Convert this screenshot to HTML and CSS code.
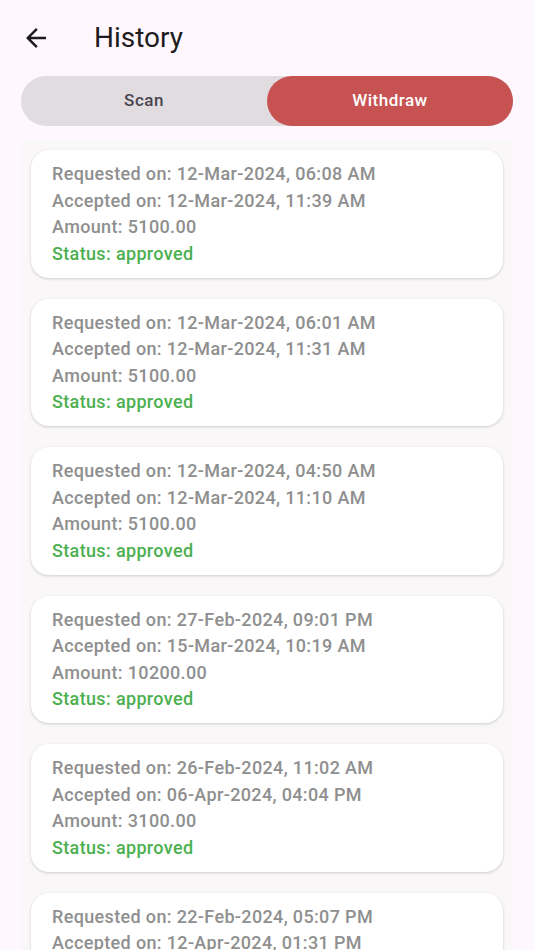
FILE: index.html
```html
<!DOCTYPE html>
<html>
<head>
<meta charset="utf-8">
<link rel="stylesheet" href="styles.css">
</head>
<body>
<div class="app">
  <header class="topbar">
    <button class="back" aria-label="Back">
      <svg width="30" height="30" viewBox="0 0 24 24"><path d="M20 11H7.83l5.59-5.59L12 4l-8 8 8 8 1.41-1.41L7.83 13H20v-2z" fill="#1d1b20"/></svg>
    </button>
    <h1 class="title">History</h1>
  </header>
  <div class="tabs">
    <div class="tab">Scan</div>
    <div class="tab active">Withdraw</div>
  </div>
  <div class="list">
    <div class="card">
      <div class="line">Requested on: 12-Mar-2024, 06:08 AM</div>
      <div class="line">Accepted on: 12-Mar-2024, 11:39 AM</div>
      <div class="line">Amount: 5100.00</div>
      <div class="line status">Status: approved</div>
    </div>
    <div class="card">
      <div class="line">Requested on: 12-Mar-2024, 06:01 AM</div>
      <div class="line">Accepted on: 12-Mar-2024, 11:31 AM</div>
      <div class="line">Amount: 5100.00</div>
      <div class="line status">Status: approved</div>
    </div>
    <div class="card">
      <div class="line">Requested on: 12-Mar-2024, 04:50 AM</div>
      <div class="line">Accepted on: 12-Mar-2024, 11:10 AM</div>
      <div class="line">Amount: 5100.00</div>
      <div class="line status">Status: approved</div>
    </div>
    <div class="card">
      <div class="line">Requested on: 27-Feb-2024, 09:01 PM</div>
      <div class="line">Accepted on: 15-Mar-2024, 10:19 AM</div>
      <div class="line">Amount: 10200.00</div>
      <div class="line status">Status: approved</div>
    </div>
    <div class="card">
      <div class="line">Requested on: 26-Feb-2024, 11:02 AM</div>
      <div class="line">Accepted on: 06-Apr-2024, 04:04 PM</div>
      <div class="line">Amount: 3100.00</div>
      <div class="line status">Status: approved</div>
    </div>
    <div class="card">
      <div class="line">Requested on: 22-Feb-2024, 05:07 PM</div>
      <div class="line">Accepted on: 12-Apr-2024, 01:31 PM</div>
      <div class="line">Amount: 3100.00</div>
      <div class="line status">Status: approved</div>
    </div>
  </div>
</div>
</body>
</html>
```
FILE: styles.css
```css
html, body {
  margin: 0;
  padding: 0;
  background: #fef7fd;
  font-family: Roboto, "Noto Sans", sans-serif;
}
.app {
  width: 534px;
  height: 950px;
  overflow: hidden;
}
.topbar {
  display: flex;
  align-items: center;
  height: 76px;
  box-sizing: border-box;
  padding: 0 0 0 21px;
}
.back {
  border: 0;
  background: none;
  padding: 0;
  width: 30px;
  height: 30px;
  display: flex;
}
.title {
  margin: -2px 0 0 43px;
  font-size: 28px;
  font-weight: 400;
  color: #1d1b20;
  letter-spacing: 0;
}
.tabs {
  display: flex;
  margin: 0 21px;
  height: 50px;
  background: #e0dcdf;
  border-radius: 25px;
}
.tab {
  flex: 1;
  display: flex;
  align-items: center;
  justify-content: center;
  font-size: 17px;
  font-weight: 500;
  letter-spacing: 0.5px;
  color: #49454f;
  border-radius: 25px;
  padding-bottom: 2px;
  box-sizing: border-box;
}
.tab.active {
  background: #c75252;
  color: #ffffff;
}
.list {
  margin: 14px 21px 0;
  padding: 10px 10px 0;
  background: #faf7f9;
  display: flex;
  flex-direction: column;
  gap: 21px;
}
.card {
  background: #ffffff;
  border-radius: 18px;
  box-shadow: 0 1px 3px rgba(0,0,0,0.18);
  padding: 11px 21px 10px;
  height: 127.6px;
  box-sizing: border-box;
  flex-shrink: 0;
}
.line {
  font-size: 18px;
  line-height: 26.5px;
  color: #8f8f8f;
  font-weight: 500;
  letter-spacing: 0.35px;
  white-space: nowrap;
}
.status {
  color: #4cb050;
}
```
